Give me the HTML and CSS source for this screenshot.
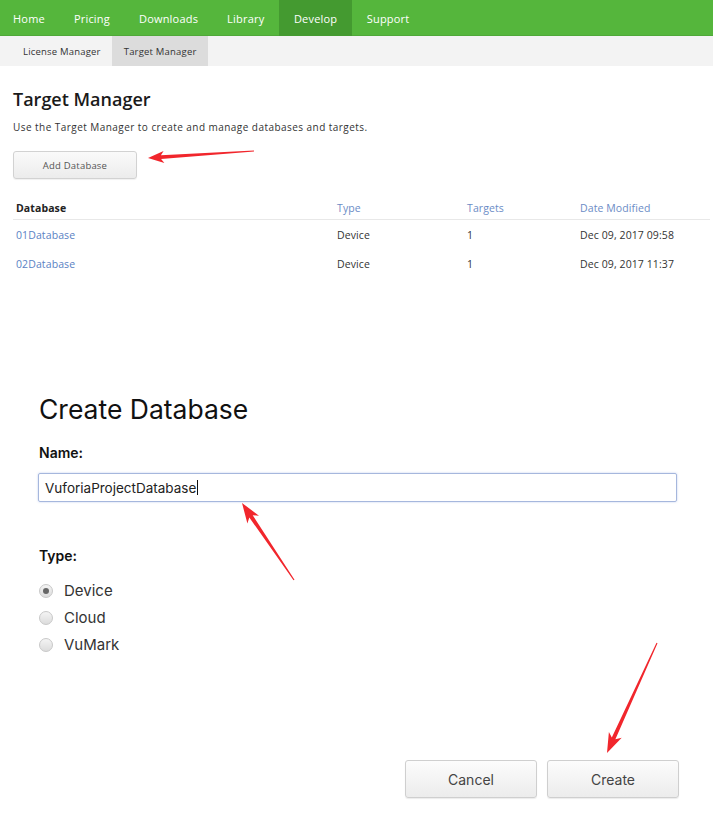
FILE: index.html
```html
<!DOCTYPE html>
<html>
<head>
<meta charset="utf-8">
<link rel="stylesheet" href="styles.css">
</head>
<body>
<nav class="topnav">
  <a class="nav-item">Home</a>
  <a class="nav-item">Pricing</a>
  <a class="nav-item">Downloads</a>
  <a class="nav-item">Library</a>
  <a class="nav-item active">Develop</a>
  <a class="nav-item">Support</a>
</nav>
<nav class="subnav">
  <a class="sub-item">License Manager</a>
  <a class="sub-item active">Target Manager</a>
</nav>
<main class="manager">
  <h1 class="title">Target Manager</h1>
  <p class="desc">Use the Target Manager to create and manage databases and targets.</p>
  <button class="btn-add">Add Database</button>
  <div class="table">
    <div class="row head">
      <span class="c1 strong">Database</span>
      <span class="c2 blue">Type</span>
      <span class="c3 blue">Targets</span>
      <span class="c4 blue">Date Modified</span>
    </div>
    <div class="row">
      <span class="c1 link">01Database</span>
      <span class="c2">Device</span>
      <span class="c3">1</span>
      <span class="c4">Dec 09, 2017 09:58</span>
    </div>
    <div class="row">
      <span class="c1 link">02Database</span>
      <span class="c2">Device</span>
      <span class="c3">1</span>
      <span class="c4">Dec 09, 2017 11:37</span>
    </div>
  </div>
</main>
<section class="dialog">
  <h2 class="dlg-title">Create Database</h2>
  <div class="label">Name:</div>
  <div class="input"><span class="val">VuforiaProjectDatabase</span><span class="caret"></span></div>
  <div class="label type-label">Type:</div>
  <div class="radios">
    <div class="radio-row"><span class="radio checked"></span><span>Device</span></div>
    <div class="radio-row"><span class="radio"></span><span>Cloud</span></div>
    <div class="radio-row"><span class="radio"></span><span>VuMark</span></div>
  </div>
  <div class="actions">
    <button class="btn">Cancel</button>
    <button class="btn">Create</button>
  </div>
</section>
<svg class="arrows" width="713" height="832" viewBox="0 0 713 832">
  <polygon fill="#f1262c" points="148,158 164.4,162.9 161.1,158.9 254,151.6 254,150.4 160.9,155.3 163.6,150.9"/>
  <polygon fill="#f1262c" points="242,503 259,515.7 252.7,515.2 294.5,579.7 293.5,580.3 249.3,517.4 247.4,523.5"/>
  <polygon fill="#f1262c" points="607,753 621.7,737.7 615.4,739.2 657.5,643.2 656.5,642.8 611.8,737.6 608.9,731.9"/>
</svg>
</body>
</html>
```
FILE: styles.css
```css
html, body {
  margin: 0;
  padding: 0;
  background: #fff;
}
body {
  position: relative;
  width: 713px;
  height: 832px;
  overflow: hidden;
  font-family: "Open Sans", "Liberation Sans", sans-serif;
  color: #333;
}
.topnav {
  display: flex;
  height: 36px;
  background: #55b63c;
  box-shadow: inset 0 -1px 0 #4fa838;
}
.nav-item {
  display: flex;
  align-items: center;
  padding: 0 14.5px;
  color: #fff;
  font-size: 11px;
  letter-spacing: 0.2px;
}
.nav-item:first-child { padding-left: 13px; }
.nav-item.active {
  background: #449a30;
  padding: 0 15px;
}
.subnav {
  display: flex;
  height: 30px;
  padding-left: 12px;
  background: #f3f3f3;
}
.sub-item {
  display: flex;
  align-items: center;
  padding: 0 11px;
  font-size: 9.5px;
  letter-spacing: 0.2px;
  color: #333;
}
.sub-item.active {
  background: #dcdcdc;
  padding: 0 11px 0 12px;
}
.manager {
  padding: 0 3px 0 13px;
}
.title {
  margin: 19px 0 0;
  font-size: 18px;
  line-height: 28px;
  font-weight: 600;
  color: #1a1a1a;
}
.desc {
  margin: 8px 0 0;
  font-size: 10px;
  line-height: 13px;
  letter-spacing: 0.45px;
  color: #333;
}
.btn-add {
  display: block;
  margin-top: 17px;
  width: 124px;
  height: 28px;
  border: 1px solid #d2d2d2;
  border-radius: 3px;
  background: linear-gradient(#fafafa, #ececec);
  box-shadow: 0 1px 1px rgba(0,0,0,0.06);
  font-family: "Open Sans", "Liberation Sans", sans-serif;
  font-size: 9.5px;
  letter-spacing: 0.2px;
  color: #555;
}
.table {
  margin-top: 17px;
}
.row {
  display: grid;
  grid-template-columns: 321px 130px 113px 1fr;
  height: 29px;
  align-items: center;
  padding-left: 3px;
  font-size: 10.5px;
  letter-spacing: 0.1px;
  color: #333;
}
.row.head {
  height: 23px;
  border-bottom: 1px solid #e8e8e8;
}
.strong { font-weight: 700; color: #222; }
.blue { color: #6b8cc6; }
.link { color: #5a82c4; }
.dialog {
  padding: 0 34px 0 38px;
  font-family: Inter, "Liberation Sans", sans-serif;
}
.dlg-title {
  margin: 116px 0 0 1px;
  font-size: 26.5px;
  line-height: 30px;
  font-weight: 400;
  color: #111;
}
.label {
  margin: 19px 0 0 1px;
  font-size: 14px;
  line-height: 20px;
  font-weight: 600;
  color: #111;
}
.input {
  display: flex;
  align-items: center;
  margin: 10px 2px 0 0;
  height: 29px;
  box-sizing: border-box;
  border: 1px solid #a6b7dd;
  border-radius: 2px;
  box-shadow: 0 0 2px rgba(120,150,220,0.5);
  padding-left: 6px;
  font-size: 13.5px;
  color: #222;
}
.caret {
  display: inline-block;
  width: 1px;
  height: 15px;
  background: #111;
  margin-left: 1px;
}
.type-label {
  margin-top: 44px;
}
.radios {
  margin-top: 11px;
  margin-left: 1px;
}
.radio-row {
  display: flex;
  align-items: center;
  height: 27px;
  font-size: 15px;
  color: #333;
}
.radio {
  position: relative;
  width: 12px;
  height: 12px;
  margin-right: 11px;
  border-radius: 50%;
  border: 1px solid #c8c8c8;
  background: linear-gradient(#f4f4f4, #dcdcdc);
}
.radio.checked::after {
  content: "";
  position: absolute;
  left: 3px;
  top: 3px;
  width: 6px;
  height: 6px;
  border-radius: 50%;
  background: #666;
}
.actions {
  display: flex;
  justify-content: flex-end;
  gap: 10px;
  margin-top: 102px;
}
.btn {
  width: 132px;
  height: 38px;
  border: 1px solid #cfcfcf;
  border-radius: 3px;
  background: linear-gradient(#fcfcfc, #ececec);
  box-shadow: 0 1px 1px rgba(0,0,0,0.08);
  font-family: Inter, "Liberation Sans", sans-serif;
  font-size: 14px;
  color: #444;
}
.arrows {
  position: absolute;
  left: 0;
  top: 0;
  pointer-events: none;
}
```
